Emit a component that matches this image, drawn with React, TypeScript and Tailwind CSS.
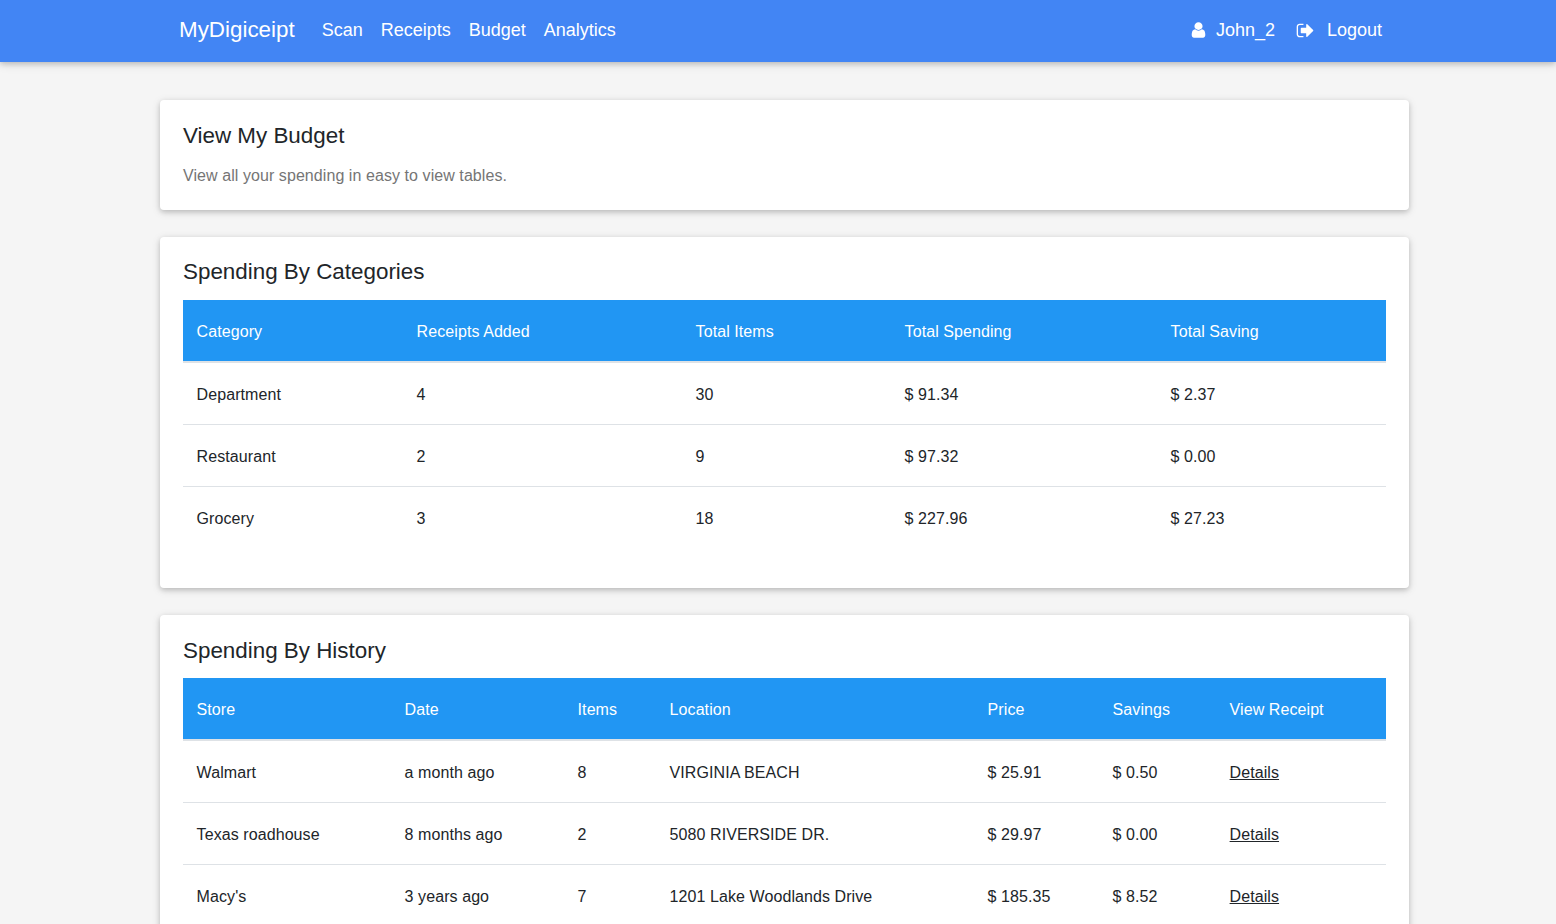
const categories = [
  { name: "Department", receipts: "4", items: "30", spending: "$ 91.34", saving: "$ 2.37" },
  { name: "Restaurant", receipts: "2", items: "9", spending: "$ 97.32", saving: "$ 0.00" },
  { name: "Grocery", receipts: "3", items: "18", spending: "$ 227.96", saving: "$ 27.23" },
];

const history = [
  { store: "Walmart", date: "a month ago", items: "8", location: "VIRGINIA BEACH", price: "$ 25.91", savings: "$ 0.50" },
  { store: "Texas roadhouse", date: "8 months ago", items: "2", location: "5080 RIVERSIDE DR.", price: "$ 29.97", savings: "$ 0.00" },
  { store: "Macy's", date: "3 years ago", items: "7", location: "1201 Lake Woodlands Drive", price: "$ 185.35", savings: "$ 8.52" },
];

const thClass = "h-[62px] border-b-2 border-[#dee2e6] px-[13.6px] pt-[2px] text-left font-normal tracking-[0.08px] text-white";
const tdClass = "h-[62px] px-[13.6px] pt-[4px] text-left font-normal tracking-[0.08px]";

function UserIcon() {
  return (
    <svg viewBox="0 0 1792 1792" className="h-[18px] w-[19px] fill-white" preserveAspectRatio="none">
      <path d="M1536 1399q0 109-62.5 187t-150.5 78h-854q-88 0-150.5-78t-62.5-187q0-85 8.5-160.5t31.5-152 58.5-131 94-89 134.5-34.5q131 128 313 128t313-128q76 0 134.5 34.5t94 89 58.5 131 31.5 152 8.5 160.5zm-256-887q0 159-112.5 271.5t-271.5 112.5-271.5-112.5-112.5-271.5 112.5-271.5 271.5-112.5 271.5 112.5 112.5 271.5z" />
    </svg>
  );
}

function LogoutIcon() {
  return (
    <svg viewBox="0 0 1792 1792" className="h-[19px] w-[19px] fill-white">
      <path d="M704 1440q0 4 1 20t.5 26.5-3 23.5-10 19.5-20.5 6.5h-320q-119 0-203.5-84.5t-84.5-203.5v-704q0-119 84.5-203.5t203.5-84.5h320q13 0 22.5 9.5t9.5 22.5q0 4 1 20t.5 26.5-3 23.5-10 19.5-20.5 6.5h-320q-66 0-113 47t-47 113v704q0 66 47 113t113 47h312l11.5 1 11.5 3 8 5.5 7 9 2 13.5zm928-544q0 26-19 45l-544 544q-19 19-45 19t-45-19-19-45v-288h-448q-26 0-45-19t-19-45v-384q0-26 19-45t45-19h448v-288q0-26 19-45t45-19 45 19l544 544q19 19 19 45z" />
    </svg>
  );
}

function Navbar() {
  return (
    <nav className="flex h-[62px] items-center bg-[#4285f4] pb-[2px] pl-[179px] pr-[174px] text-[18px] text-white shadow-[0_2px_5px_rgba(0,0,0,0.16),0_2px_10px_rgba(0,0,0,0.12)]">
      <a className="mr-[27px] text-[22.4px]">MyDigiceipt</a>
      <div className="flex gap-[18px]">
        <a>Scan</a>
        <a>Receipts</a>
        <a>Budget</a>
        <a>Analytics</a>
      </div>
      <div className="ml-auto flex items-center">
        <UserIcon />
        <a className="ml-[8px]">John_2</a>
        <span className="ml-[21px]">
          <LogoutIcon />
        </span>
        <a className="ml-[12px]">Logout</a>
      </div>
    </nav>
  );
}

function Card({ className, children }: { className: string; children: React.ReactNode }) {
  return (
    <section className={`rounded-[4px] bg-white px-[23px] shadow-[0_2px_5px_rgba(0,0,0,0.16),0_2px_10px_rgba(0,0,0,0.12)] ${className}`}>
      {children}
    </section>
  );
}

export default function App() {
  return (
    <div className="h-[924px] overflow-hidden bg-[#f5f5f5] font-['Liberation_Sans',Arial,sans-serif] text-[16px] text-[#212529]">
      <Navbar />

      <main className="ml-[160px] mt-[38px] flex w-[1249px] flex-col gap-[27px]">
        {/* Intro */}
        <Card className="h-[110px] pt-[21px]">
          <h2 className="text-[22.4px] leading-[29px]">View My Budget</h2>
          <p className="mt-[16px] leading-[20px] tracking-[0.07px] text-[#757575]">View all your spending in easy to view tables.</p>
        </Card>

        {/* Categories */}
        <Card className="h-[351px] pt-[20px]">
          <h2 className="mb-[14px] text-[22.4px] leading-[29px]">Spending By Categories</h2>
          <table className="w-full table-fixed border-collapse">
            <thead className="bg-[#2196f3]">
              <tr>
                <th className={`w-[220px] ${thClass}`}>Category</th>
                <th className={`w-[279px] ${thClass}`}>Receipts Added</th>
                <th className={`w-[209px] ${thClass}`}>Total Items</th>
                <th className={`w-[266px] ${thClass}`}>Total Spending</th>
                <th className={thClass}>Total Saving</th>
              </tr>
            </thead>
            <tbody>
              {categories.map((row, i) => (
                <tr key={row.name} className={i < categories.length - 1 ? "border-b border-[#dee2e6]" : ""}>
                  <td className={tdClass}>{row.name}</td>
                  <td className={tdClass}>{row.receipts}</td>
                  <td className={tdClass}>{row.items}</td>
                  <td className={tdClass}>{row.spending}</td>
                  <td className={tdClass}>{row.saving}</td>
                </tr>
              ))}
            </tbody>
          </table>
        </Card>

        {/* History */}
        <Card className="pb-6 pt-[22px]">
          <h2 className="mb-[13px] text-[22.4px] leading-[28px]">Spending By History</h2>
          <table className="w-full table-fixed border-collapse">
            <thead className="bg-[#2196f3]">
              <tr>
                <th className={`w-[208px] ${thClass}`}>Store</th>
                <th className={`w-[173px] ${thClass}`}>Date</th>
                <th className={`w-[92px] ${thClass}`}>Items</th>
                <th className={`w-[318px] ${thClass}`}>Location</th>
                <th className={`w-[125px] ${thClass}`}>Price</th>
                <th className={`w-[117px] ${thClass}`}>Savings</th>
                <th className={thClass}>View Receipt</th>
              </tr>
            </thead>
            <tbody>
              {history.map((row) => (
                <tr key={row.store} className="border-b border-[#dee2e6]">
                  <td className={tdClass}>{row.store}</td>
                  <td className={tdClass}>{row.date}</td>
                  <td className={tdClass}>{row.items}</td>
                  <td className={tdClass}>{row.location}</td>
                  <td className={tdClass}>{row.price}</td>
                  <td className={tdClass}>{row.savings}</td>
                  <td className={tdClass}>
                    <a className="underline">Details</a>
                  </td>
                </tr>
              ))}
            </tbody>
          </table>
        </Card>
      </main>
    </div>
  );
}
